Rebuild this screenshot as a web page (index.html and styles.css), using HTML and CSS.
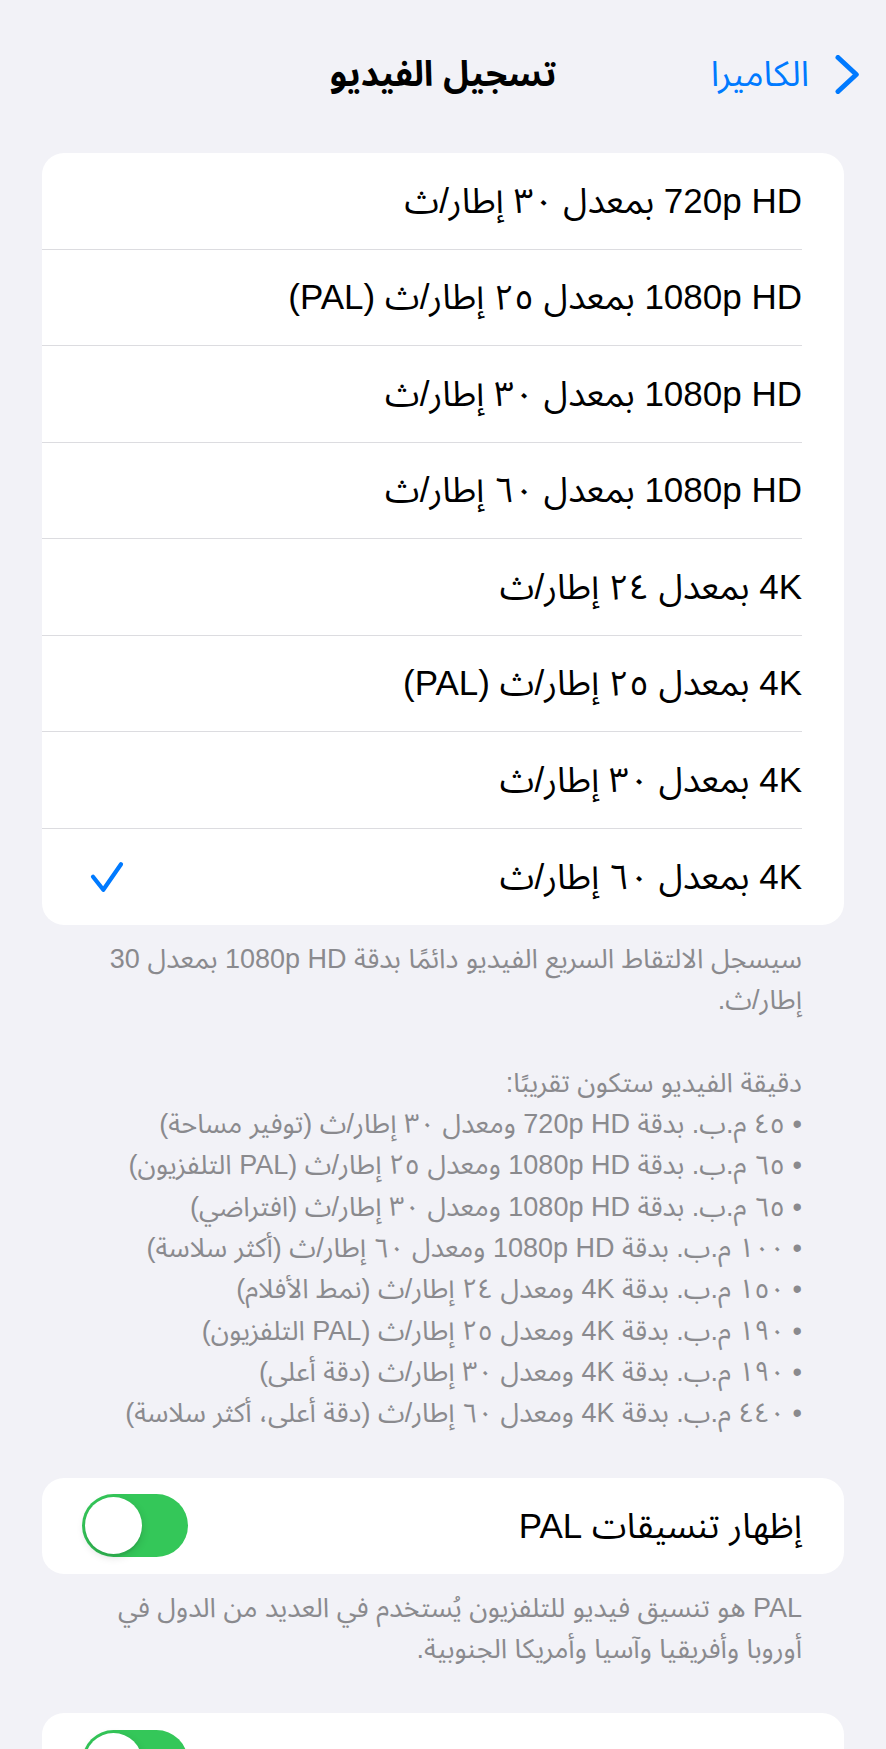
FILE: index.html
```html
<!DOCTYPE html>
<html lang="ar" dir="rtl">
<head>
<meta charset="utf-8">
<title>تسجيل الفيديو</title>
<link rel="stylesheet" href="styles.css">
</head>
<body>
<header class="nav">
  <a class="back">
    <svg class="chev" width="24" height="39" viewBox="0 0 24 39"><path d="M3 2.5 L21.3 19.5 L3 36.5" fill="none" stroke="#007aff" stroke-width="5" stroke-linecap="round" stroke-linejoin="round"/></svg>
    <span class="back-label">الكاميرا</span>
  </a>
  <h1 class="title">تسجيل الفيديو</h1>
  <span class="spacer"></span>
</header>

<main>
  <section class="group first">
    <ul class="card">
      <li class="row"><div class="row-inner"><span class="label">720p HD بمعدل ٣٠ إطار/ث</span></div></li>
      <li class="row"><div class="row-inner"><span class="label">1080p HD بمعدل ٢٥ إطار/ث (PAL)</span></div></li>
      <li class="row"><div class="row-inner"><span class="label">1080p HD بمعدل ٣٠ إطار/ث</span></div></li>
      <li class="row"><div class="row-inner"><span class="label">1080p HD بمعدل ٦٠ إطار/ث</span></div></li>
      <li class="row"><div class="row-inner"><span class="label">4K بمعدل ٢٤ إطار/ث</span></div></li>
      <li class="row"><div class="row-inner"><span class="label">4K بمعدل ٢٥ إطار/ث (PAL)</span></div></li>
      <li class="row"><div class="row-inner"><span class="label">4K بمعدل ٣٠ إطار/ث</span></div></li>
      <li class="row"><div class="row-inner"><span class="label">4K بمعدل ٦٠ إطار/ث</span>
        <svg class="check" width="34" height="32" viewBox="0 0 34 32"><path d="M3 15.7 L13.3 28.8 L31 3.2" fill="none" stroke="#007aff" stroke-width="4.2" stroke-linecap="round" stroke-linejoin="round"/></svg>
      </div></li>
    </ul>
    <div class="footer">
      <p>سيسجل الالتقاط السريع الفيديو دائمًا بدقة 1080p HD بمعدل 30 إطار/ث.</p>
      <p class="gap">دقيقة الفيديو ستكون تقريبًا:</p>
      <ul class="notes">
        <li>• ٤٥ م.ب. بدقة 720p HD ومعدل ٣٠ إطار/ث (توفير مساحة)</li>
        <li>• ٦٥ م.ب. بدقة 1080p HD ومعدل ٢٥ إطار/ث (PAL التلفزيون)</li>
        <li>• ٦٥ م.ب. بدقة 1080p HD ومعدل ٣٠ إطار/ث (افتراضي)</li>
        <li>• ١٠٠ م.ب. بدقة 1080p HD ومعدل ٦٠ إطار/ث (أكثر سلاسة)</li>
        <li>• ١٥٠ م.ب. بدقة 4K ومعدل ٢٤ إطار/ث (نمط الأفلام)</li>
        <li>• ١٩٠ م.ب. بدقة 4K ومعدل ٢٥ إطار/ث (PAL التلفزيون)</li>
        <li>• ١٩٠ م.ب. بدقة 4K ومعدل ٣٠ إطار/ث (دقة أعلى)</li>
        <li>• ٤٤٠ م.ب. بدقة 4K ومعدل ٦٠ إطار/ث (دقة أعلى، أكثر سلاسة)</li>
      </ul>
    </div>
  </section>

  <section class="group">
    <div class="card">
      <div class="toggle-row">
        <span class="label">إظهار تنسيقات PAL</span>
        <span class="switch on"><span class="knob"></span></span>
      </div>
    </div>
    <div class="footer">
      <p>PAL هو تنسيق فيديو للتلفزيون يُستخدم في العديد من الدول في أوروبا وأفريقيا وآسيا وأمريكا الجنوبية.</p>
    </div>
  </section>

  <section class="group">
    <div class="card">
      <div class="toggle-row">
        <span class="label"></span>
        <span class="switch on"><span class="knob"></span></span>
      </div>
    </div>
  </section>
</main>
</body>
</html>
```

FILE: styles.css
```css
* { box-sizing: border-box; }

html, body {
  margin: 0;
  padding: 0;
}

body {
  width: 886px;
  background: #f2f2f7;
  font-family: "Liberation Sans", "Noto Sans Arabic", "DejaVu Sans", sans-serif;
  color: #000;
  overflow: hidden;
}

.nav {
  height: 148px;
  padding: 0 27px;
  display: grid;
  grid-template-columns: 1fr auto 1fr;
  align-items: center;
}

.back {
  justify-self: start;
  display: flex;
  align-items: center;
  gap: 26px;
  color: #007aff;
  text-decoration: none;
}

.chev { display: block; }

.back-label {
  font-size: 35px;
  line-height: 40px;
}

.title {
  margin: 0;
  font-size: 35px;
  line-height: 40px;
  font-weight: bold;
}

main { padding-top: 5px; }

.group { margin-bottom: 43px; }

.card {
  margin: 0 42px;
  padding: 0;
  list-style: none;
  background: #fff;
  border-radius: 22px;
  overflow: hidden;
}

.row {
  padding-right: 42px;
}

.row-inner {
  height: 96.5px;
  display: flex;
  align-items: center;
  justify-content: space-between;
  padding-left: 48px;
  border-bottom: 1px solid #dcdce0;
}

.row:last-child .row-inner { border-bottom: none; }

.label {
  font-size: 35px;
  line-height: 42px;
  white-space: nowrap;
}

.check { display: block; }

.footer {
  padding: 14px 84px 0;
  font-size: 27px;
  line-height: 41.3px;
  color: #8a8a8e;
}

.footer p { margin: 0; }

.footer .gap { margin-top: 41.3px; }

.notes {
  margin: 0;
  padding: 0;
  list-style: none;
}

.toggle-row {
  height: 96px;
  display: flex;
  align-items: center;
  justify-content: space-between;
  padding: 0 42px 0 40px;
}

.switch {
  position: relative;
  width: 106px;
  height: 63px;
  border-radius: 31.5px;
  background: #e9e9eb;
  flex: none;
}

.switch.on { background: #34c759; }

.knob {
  position: absolute;
  top: 3px;
  left: 3px;
  width: 57px;
  height: 57px;
  border-radius: 50%;
  background: #fff;
  box-shadow: 0 3px 8px rgba(0, 0, 0, 0.15), 0 3px 1px rgba(0, 0, 0, 0.06);
}
```
